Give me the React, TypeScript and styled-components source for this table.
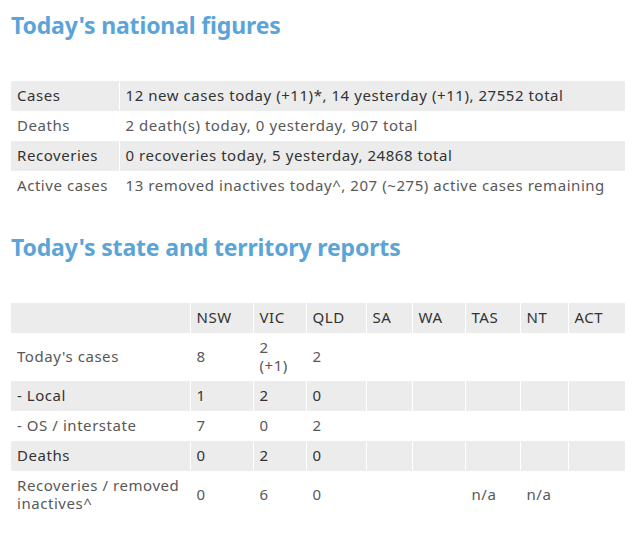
import styled, { createGlobalStyle } from "styled-components";

const GlobalStyle = createGlobalStyle`
  body {
    margin: 0;
    background: #ffffff;
    font-family: "Noto Sans", "Open Sans", sans-serif;
  }
`;

const national = [
  ["Cases", "12 new cases today (+11)*, 14 yesterday (+11), 27552 total"],
  ["Deaths", "2 death(s) today, 0 yesterday, 907 total"],
  ["Recoveries", "0 recoveries today, 5 yesterday, 24868 total"],
  ["Active cases", "13 removed inactives today^, 207 (~275) active cases remaining"],
];

const states = ["NSW", "VIC", "QLD", "SA", "WA", "TAS", "NT", "ACT"];
const stateWidths = [179, 63, 53, 60, 46, 53, 55, 48, 57];

const stateRows: [string, string[]][] = [
  ["Today's cases", ["8", "2 (+1)", "2", "", "", "", "", ""]],
  ["- Local", ["1", "2", "0", "", "", "", "", ""]],
  ["- OS / interstate", ["7", "0", "2", "", "", "", "", ""]],
  ["Deaths", ["0", "2", "0", "", "", "", "", ""]],
  ["Recoveries / removed inactives^", ["0", "6", "0", "", "", "n/a", "n/a", ""]],
];

function App() {
  return (
    <Page>
      <GlobalStyle />
      <Heading>Today's national figures</Heading>
      <Table>
        <colgroup>
          <Col $w={108} />
          <Col $w={506} />
        </colgroup>
        <tbody>
          {national.map(([label, value], i) => (
            <Row key={label} $shaded={i % 2 === 0}>
              <Cell>{label}</Cell>
              <Cell>{value}</Cell>
            </Row>
          ))}
        </tbody>
      </Table>

      <Heading $gap>Today's state and territory reports</Heading>
      <Table>
        <colgroup>
          {stateWidths.map((w, i) => (
            <Col key={i} $w={w} />
          ))}
        </colgroup>
        <tbody>
          <Row $shaded>
            <Cell />
            {states.map((s) => (
              <Cell key={s}>{s}</Cell>
            ))}
          </Row>
          {stateRows.map(([label, values], i) => (
            <Row key={label} $shaded={i % 2 === 1}>
              <Cell>{label}</Cell>
              {values.map((v, j) => (
                <Cell key={j}>{v}</Cell>
              ))}
            </Row>
          ))}
        </tbody>
      </Table>
    </Page>
  );
}

export default App;

const Page = styled.div`
  padding: 0 11px;
  width: 614px;
`;

const Heading = styled.h2<{ $gap?: boolean }>`
  margin: ${(p) => (p.$gap ? "31px" : "10px")} 0 41px 0;
  font-family: "Noto Sans", sans-serif;
  font-size: 23px;
  font-weight: 700;
  letter-spacing: -0.15px;
  line-height: 30px;
  color: #5ba4d8;
`;

const Table = styled.table`
  width: 614px;
  border-collapse: collapse;
  table-layout: fixed;
`;

const Col = styled.col<{ $w: number }>`
  width: ${(p) => p.$w}px;
`;

const Row = styled.tr<{ $shaded?: boolean }>`
  background: ${(p) => (p.$shaded ? "#ececec" : "transparent")};
  color: ${(p) => (p.$shaded ? "#333333" : "#585858")};
`;

const Cell = styled.td`
  border-left: 1px solid #ffffff;
  padding: 5px 6px 7px;
  font-size: 15px;
  letter-spacing: 0.55px;
  line-height: 18px;
  vertical-align: middle;
  &:first-child {
    border-left: none;
  }
`;
